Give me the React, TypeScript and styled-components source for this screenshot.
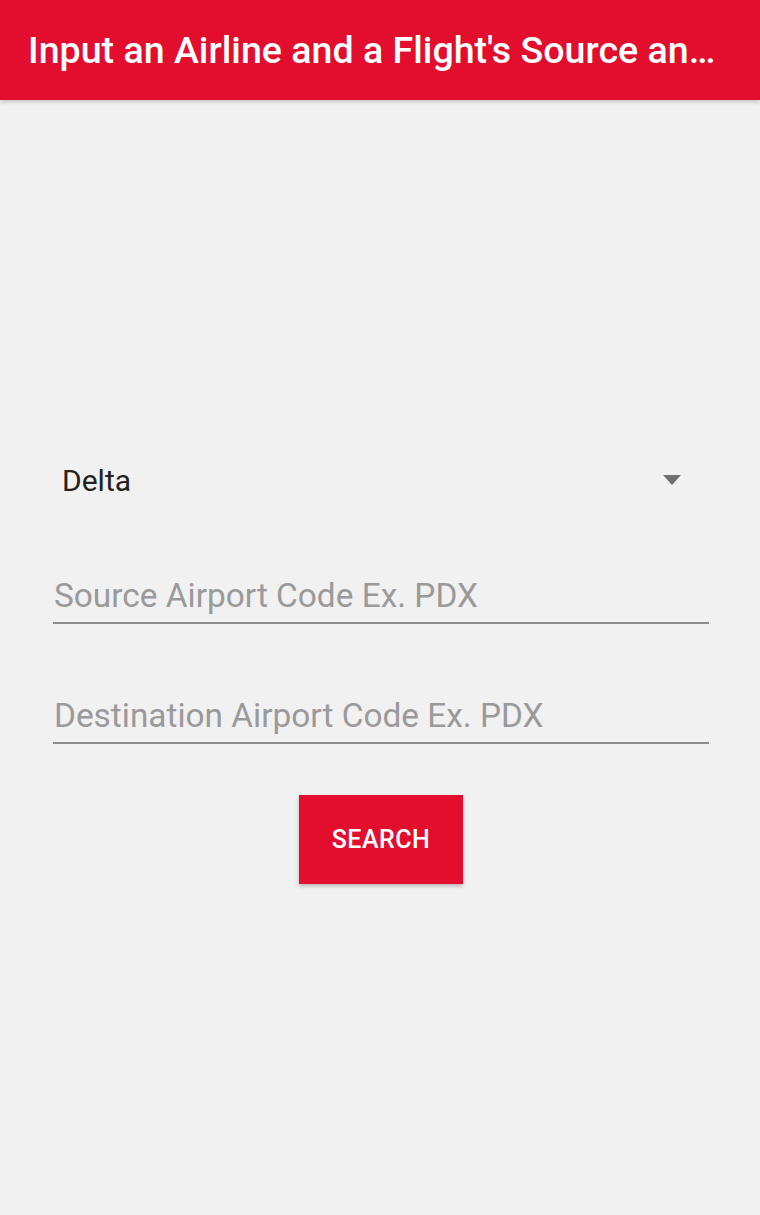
import React from "react"
import styled, { createGlobalStyle } from "styled-components"

const Global = createGlobalStyle`
  html, body {
    margin: 0;
    padding: 0;
    background: #f1f1f1;
    font-family: Roboto, "Noto Sans", sans-serif;
  }
`

const Page = styled.div`
  width: 760px;
  height: 1215px;
  background: #f1f1f1;
  overflow: hidden;
`

const AppBar = styled.header`
  height: 100px;
  background: #e30d2e;
  display: flex;
  align-items: center;
  padding: 0 28px;
  box-shadow: 0 2px 4px rgba(0, 0, 0, 0.18);
`

const Title = styled.h1`
  margin: 0;
  color: #fff;
  font-size: 37.6px;
  font-weight: 500;
  white-space: nowrap;
`

const Form = styled.div`
  display: flex;
  flex-direction: column;
  padding: 0 51px 0 53px;
  margin-top: 350px;
`

const Spinner = styled.div`
  height: 60px;
  display: flex;
  align-items: center;
  justify-content: space-between;
  padding: 0 28px 0 9px;
  font-size: 30px;
  color: #222;
`

const Caret = styled.span`
  width: 0;
  height: 0;
  border-left: 9px solid transparent;
  border-right: 9px solid transparent;
  border-top: 10px solid #6f6f6f;
`

const Field = styled.div<{ $top: number }>`
  margin-top: ${(p) => p.$top}px;
  height: 62px;
  display: flex;
  align-items: flex-end;
  border-bottom: 2px solid #8c8c8c;
`

const Input = styled.input`
  width: 100%;
  border: none;
  background: transparent;
  outline: none;
  padding: 0 0 7px 1px;
  font-family: Roboto, sans-serif;
  font-size: 33.4px;
  color: #222;
  &::placeholder {
    color: #9a9a9a;
  }
`

const Button = styled.button`
  align-self: center;
  margin-top: 51px;
  width: 164px;
  height: 89px;
  border: none;
  background: #e30d2e;
  color: #fff;
  font-family: Roboto, sans-serif;
  font-size: 25px;
  font-weight: 500;
  letter-spacing: 0.5px;
  box-shadow: 0 2px 4px rgba(0, 0, 0, 0.25);
`

export default function App() {
  return (
    <Page>
      <Global />
      <AppBar>
        <Title>Input an Airline and a Flight's Source an…</Title>
      </AppBar>
      <Form>
        <Spinner>
          <span>Delta</span>
          <Caret />
        </Spinner>
        <Field $top={50}>
          <Input placeholder="Source Airport Code Ex. PDX" />
        </Field>
        <Field $top={56}>
          <Input placeholder="Destination Airport Code Ex. PDX" />
        </Field>
        <Button>SEARCH</Button>
      </Form>
    </Page>
  )
}
